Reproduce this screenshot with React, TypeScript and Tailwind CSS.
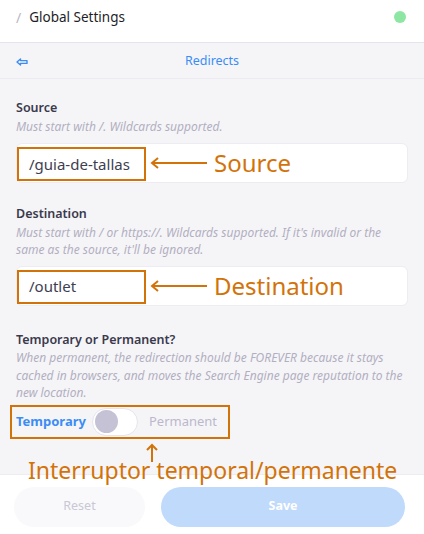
const orange = "text-[#d2730a]";

function BackArrow() {
  return (
    <svg width="12" height="8" viewBox="0 0 12 8" fill="none" className="text-[#3b8cf5]">
      <path d="M1 4 L4.5 1 V2.6 H11 V5.4 H4.5 V7 Z" stroke="currentColor" strokeWidth="1.4" strokeLinejoin="round" />
    </svg>
  );
}

function Field({ label, hint, value, note }: { label: string; hint: string; value: string; note: string }) {
  return (
    <div className="flex flex-col">
      <div className="text-[12.5px] font-semibold text-[#3a3a4c]">{label}</div>
      <div className="text-[12px] italic leading-[17px] text-[#b2afc0]">{hint}</div>
      <div className="relative mt-[8px] h-[40px] rounded-md border border-[#ececf2] bg-white">
        <div className="absolute left-0 top-[3px] flex h-[34px] w-[129px] items-center border-2 border-[#d2730a] pl-[10px] text-[15px] text-[#3e3e50]">
          {value}
        </div>
        <div className={`absolute left-[133px] top-0 flex h-[38px] items-center gap-[7px] ${orange}`}>
          <svg width="57" height="12" viewBox="0 0 57 12" fill="none" stroke="currentColor" strokeWidth="2">
            <path d="M2 6 H57 M8 1 L2 6 L8 11" />
          </svg>
          <span className="text-[24px] leading-none">{note}</span>
        </div>
      </div>
    </div>
  );
}

export default function App() {
  return (
    <div className="relative flex h-[534px] w-[424px] flex-col overflow-hidden bg-[#f5f5f8] font-['Noto_Sans',sans-serif]">
      <div className="flex h-[43px] items-center border-b border-[#e4e4ec] bg-white px-4 pb-[8px]">
        <span className="text-[14px] text-[#b8b8c4]">/</span>
        <span className="ml-[8px] text-[13.5px] text-[#1e1e28]">Global Settings</span>
        <span className="ml-auto mr-[2px] h-[12px] w-[12px] rounded-full bg-[#8ee6a3]" />
      </div>
      <div className="relative flex h-[36px] items-center justify-center border-b border-[#ebebf1] pt-[2px]">
        <div className="absolute left-4 top-[15px]">
          <BackArrow />
        </div>
        <span className="text-[12.5px] text-[#3b8cf5]">Redirects</span>
      </div>

      <div className="flex flex-1 flex-col px-4 pt-[20px]">
        <Field label="Source" hint="Must start with /. Wildcards supported." value="/guia-de-tallas" note="Source" />
        <div className="mt-[22px]">
          <Field
            label="Destination"
            hint="Must start with / or https://. Wildcards supported. If it's invalid or the same as the source, it'll be ignored."
            value="/outlet"
            note="Destination"
          />
        </div>
        <div className="mt-[25px] text-[12.5px] font-semibold text-[#3a3a4c]">Temporary or Permanent?</div>
        <div className="text-[12px] italic leading-[17.5px] text-[#b2afc0]">
          When permanent, the redirection should be FOREVER because it stays cached in browsers, and moves the Search Engine page reputation to the new location.
        </div>
        <div className="relative -ml-[6px] mt-[3px] flex h-[34px] w-[220px] items-center border-2 border-[#d2730a] pl-[4px]">
          <span className="text-[13px] font-bold text-[#3b8cf5]">Temporary</span>
          <div className="ml-[6px] flex h-[28px] w-[46px] items-center rounded-full border border-[#e6e4ee] bg-white px-[2px]">
            <span className="h-[23px] w-[23px] rounded-full bg-[#c6c2d6]" />
          </div>
          <span className="ml-[11px] text-[13px] text-[#bcb8cc]">Permanent</span>
        </div>
      </div>

      <div className="flex h-[60px] items-center gap-[16px] border-t border-[#ececf2] bg-white px-[14px] pt-[4px]">
        <button className="h-[40px] w-[131px] rounded-full bg-[#f9f9fb] text-[12.5px] text-[#c8c8d4]">Reset</button>
        <button className="mr-[5px] h-[40px] flex-1 rounded-full bg-[#bfdafb] text-[12.5px] font-bold text-white">Save</button>
      </div>

      <div className={`absolute left-[145px] top-[443px] ${orange}`}>
        <svg width="14" height="19" viewBox="0 0 14 19" fill="none" stroke="currentColor" strokeWidth="2">
          <path d="M7 19 V2 M2 7 L7 2 L12 7" />
        </svg>
      </div>
      <div className={`absolute left-[28px] top-[459px] text-[23px] leading-none ${orange}`}>Interruptor temporal/permanente</div>
    </div>
  );
}
